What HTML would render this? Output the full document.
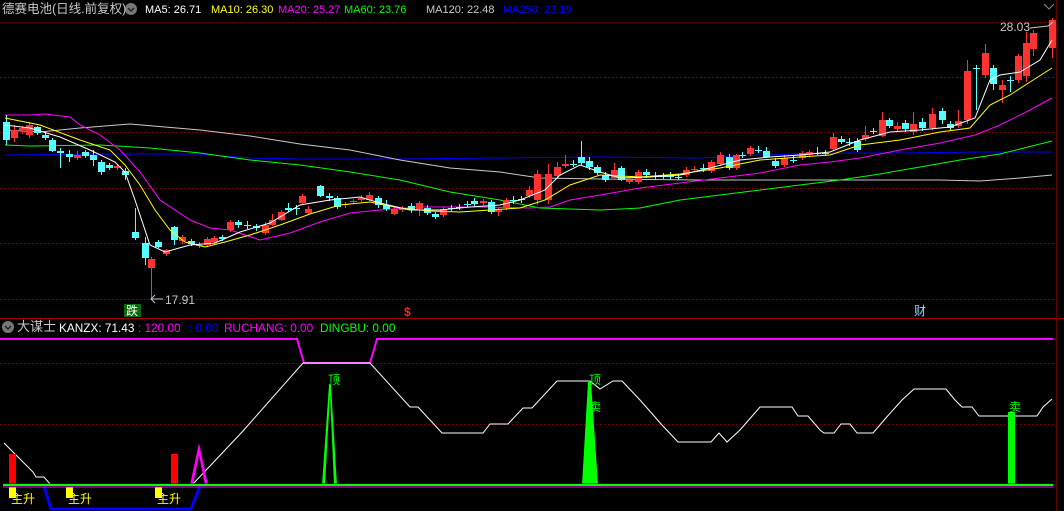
<!DOCTYPE html>
<html><head><meta charset="utf-8"><style>
body{margin:0;background:#000;width:1064px;height:511px;overflow:hidden;position:relative;font-family:"Liberation Sans","Noto Sans CJK SC",sans-serif}
.t{position:absolute;font-size:11px;white-space:nowrap;line-height:14px}
.l{font-size:11.8px}
svg{position:absolute;left:0;top:0}
</style></head><body>
<svg id="s" width="1064" height="511" viewBox="0 0 1064 511">
<g stroke="#8b0000" stroke-dasharray="1,3" stroke-width="1">
<line x1="0" y1="22.5" x2="1056" y2="22.5"/><line x1="0" y1="77.5" x2="1056" y2="77.5"/><line x1="0" y1="132.5" x2="1056" y2="132.5"/><line x1="0" y1="188.5" x2="1056" y2="188.5"/><line x1="0" y1="243.5" x2="1056" y2="243.5"/><line x1="0" y1="299.5" x2="1056" y2="299.5"/>
<line x1="0" y1="363.5" x2="1056" y2="363.5"/><line x1="0" y1="424.5" x2="1056" y2="424.5"/>
</g>
<line x1="0" y1="318.5" x2="1064" y2="318.5" stroke="#a00000"/>
<line x1="1056.5" y1="0" x2="1056.5" y2="511" stroke="#600000"/>
<g fill="none" stroke-width="1">
<polyline stroke="#0000ff" points="5,155 130,154 200,154 250,158 300,159 400,159 600,157 700,158 760,155 850,153 900,153 980,152 1052,152"/>
<polyline stroke="#c8c8c8" points="5,130 40,132 80,128 130,124 200,130 250,136 300,144 350,150 400,160 450,168 500,172 540,178 600,179 700,180 800,180 900,180 940,180 980,181 1020,178 1052,175"/>
<polyline stroke="#00ff00" points="5,145 30,146 100,145 150,148 200,153 250,160 300,165 350,172 400,180 450,192 500,200 540,208 600,210 640,208 680,200 720,195 760,190 800,185 840,180 880,174 920,167 960,160 1000,154 1052,141"/>
<polyline stroke="#ff00ff" points="5,115 30,115 45,114 70,117 80,125 100,135 120,150 140,172 160,200 190,220 210,228 230,230 260,240 290,233 320,222 350,213 380,210 420,207 480,207 530,208 550,207 570,200 600,195 640,188 680,183 720,178 760,173 800,165 830,162 860,158 900,150 940,143 975,135 1000,125 1030,110 1052,98"/>
</g>
<g id="c"></g>
<g fill="none" stroke-width="1">
<polyline stroke="#ffff00" points="5,118 40,125 80,140 110,150 125,165 140,185 155,210 170,230 185,242 205,247 225,242 250,235 280,225 310,214 340,205 370,202 400,208 430,211 460,212 490,210 520,208 545,200 570,185 600,175 640,177 680,174 720,168 760,160 800,157 830,155 860,145 900,140 940,132 970,128 990,105 1010,95 1030,82 1052,68"/>
<polyline stroke="#ffffff" points="5,125 30,128 60,137 90,150 115,162 125,172 135,200 150,245 165,252 190,245 215,243 240,232 270,223 300,205 330,200 360,197 380,203 410,210 440,210 470,207 500,205 520,200 545,190 560,175 580,165 600,172 620,178 650,177 680,175 710,168 740,160 770,157 800,155 830,152 860,140 890,132 920,130 950,127 975,118 990,80 1000,75 1020,72 1040,60 1052,40"/>
<polyline stroke="#c8c8c8" points="1030,28 1048,26 1053,22"/>
<polyline stroke="#c8c8c8" points="151,299 163,299"/><polyline stroke="#c8c8c8" points="155,295 151,299 155,303"/>
</g>
<rect x="124" y="304" width="17" height="13" fill="#0a6a0a"/>
<text x="126" y="315" font-size="12" fill="#fff" font-family="Noto Sans CJK SC,sans-serif">跌</text>
<text x="404" y="316" font-size="12" fill="#ff2020" font-weight="bold" font-family="Liberation Sans,sans-serif">$</text>
<text x="914" y="315" font-size="12" fill="#8fd8ff" font-family="Noto Sans CJK SC,sans-serif">财</text>
<text x="1000" y="31" font-size="12" fill="#c8c8c8" font-family="Liberation Sans,sans-serif">28.03</text>
<text x="165" y="304" font-size="12" fill="#c8c8c8" font-family="Liberation Sans,sans-serif">17.91</text>
<polyline fill="none" stroke="#ff00ff" stroke-width="2" points="0,339 297,339 304,363 370,363 377,339 1053,339"/>
<polyline fill="none" stroke="#fff" stroke-width="1" points="4,443 33,472 36,477 44,477 50,484 193,484 243,431 303,363 370,363 410,407 418,407 442,433 483,433 490,424 508,424 523,408 532,408 557,381 590,381 600,389 613,381 622,381 640,400 662,425 678,442 711,442 719,433 727,442 740,430 760,407 792,407 798,416 808,416 820,430 824,433 834,433 841,424 850,424 857,433 873,433 885,419 902,400 914,389 946,389 955,400 962,407 972,407 979,416 990,416 1037,416 1043,407 1052,399"/>
<polygon fill="#00ff00" points="322,485 329,385 331,385 337,485 334,485 330,395 325,485"/>
<polygon fill="#00ff00" points="582,485 588,382 591,382 598,485"/>
<rect x="1008" y="412" width="7" height="73" fill="#00ff00"/>
<rect x="9" y="454" width="7" height="30" fill="#ff0000"/>
<rect x="171" y="454" width="7" height="30" fill="#ff0000"/>
<polygon fill="#ff00ff" points="190,485 199,443 208,485 205,485 199,455 193,485"/>
<polyline fill="none" stroke="#0000ff" stroke-width="3" points="44,486 51,509 191,509 200,486"/>
<rect x="9" y="487" width="7" height="11" fill="#ffff00"/>
<rect x="66" y="487" width="7" height="11" fill="#ffff00"/>
<rect x="155" y="487" width="7" height="11" fill="#ffff00"/>
<line x1="3" y1="484" x2="1053" y2="484" stroke="#0000ff"/>
<line x1="3" y1="485" x2="1053" y2="485" stroke="#00ff00" stroke-width="2"/>
<line x1="3" y1="487" x2="1053" y2="487" stroke="#ff00ff"/>
<g font-size="12" fill="#ffff00" font-family="Noto Sans CJK SC,sans-serif">
<text x="11" y="503">主升</text><text x="68" y="503">主升</text><text x="157" y="503">主升</text></g>
<g font-size="12" fill="#00ff00" font-family="Noto Sans CJK SC,sans-serif">
<text x="328" y="384">顶</text><text x="589" y="384">顶</text><text x="589" y="411">卖</text><text x="1009" y="411">卖</text></g>
<circle cx="131" cy="9" r="6" fill="#777"/><polyline points="128,8 131,11 134,8" fill="none" stroke="#222" stroke-width="1.5"/>
<circle cx="8" cy="327" r="6" fill="#777"/><polyline points="5,326 8,329 11,326" fill="none" stroke="#222" stroke-width="1.5"/>
<polyline points="1044,4 1049,9 1054,4" fill="none" stroke="#888"/>
</svg>
<div class="t" style="left:2px;top:1px;color:#c8c8c8;font-size:12.5px;line-height:16px">德赛电池(日线.前复权)</div>
<div class="t" style="left:145px;top:3px;color:#fff">MA5: 26.71</div>
<div class="t" style="left:211px;top:3px;color:#ffff00">MA10: 26.30</div>
<div class="t" style="left:278px;top:3px;color:#ff00ff">MA20: 25.27</div>
<div class="t" style="left:344px;top:3px;color:#00ff00">MA60: 23.76</div>
<div class="t" style="left:426px;top:3px;color:#c8c8c8">MA120: 22.48</div>
<div class="t" style="left:503px;top:3px;color:#0000ff">MA250: 23.19</div>
<div class="t" style="left:17px;top:319px;color:#c8c8c8;font-size:13px;line-height:16px">大谋士</div>
<div class="t l" style="left:59px;top:321px;color:#fff">KANZX: 71.43</div>
<div class="t l" style="left:138px;top:321px;color:#ff00ff">: 120.00</div>
<div class="t l" style="left:189px;top:321px;color:#0000ff">: 0.00</div>
<div class="t l" style="left:224px;top:321px;color:#ff00ff">RUCHANG: 0.00</div>
<div class="t l" style="left:320px;top:321px;color:#00ff00">DINGBU: 0.00</div>
<script>
var d=[[6,122,140,115,145],[14,138,130,125,142],[22,130,128,126,134],[29,135,125,122,138],[37,127,133,126,135],[45,135,138,132,140],[52,140,151,138,152],[60,151,153,148,168],[69,154,157,150,162],[77,158,155,151,160],[85,152,156,150,158],[93,155,160,150,166],[101,162,172,160,175],[109,165,168,163,170],[117,168,166,164,170],[125,171,175,168,180],[135,232,238,208,240],[145,243,258,237,265],[151,268,259,257,299],[158,242,247,240,248],[166,254,250,249,256],[174,227,240,226,245],[182,241,237,235,244],[191,241,244,239,246],[199,246,245,242,248],[207,245,239,237,246],[214,242,238,236,244],[222,237,239,235,241],[230,230,222,220,232],[238,222,225,220,228],[247,225,225,221,229],[256,226,228,224,231],[265,233,225,222,235],[272,225,220,214,226],[281,220,212,210,221],[288,208,210,203,212],[296,208,208,205,215],[302,203,196,194,204],[308,213,209,206,215],[320,186,196,185,197],[329,196,198,193,201],[337,198,207,196,209],[345,205,204,202,208],[353,202,201,199,204],[361,200,198,195,202],[369,200,195,192,201],[378,198,205,196,208],[386,205,209,200,211],[394,214,209,207,215],[402,210,208,206,212],[411,206,210,203,213],[419,209,203,201,216],[427,208,213,205,215],[435,214,217,212,219],[443,215,209,207,217],[451,208,208,205,211],[459,207,207,204,210],[467,204,204,201,207],[474,201,204,198,206],[483,203,201,199,205],[491,202,212,200,214],[498,212,210,208,216],[506,208,200,198,210],[513,200,200,196,204],[521,199,199,196,203],[529,196,190,186,198],[537,200,174,170,205],[548,200,174,164,204],[557,176,167,162,178],[565,166,164,155,168],[573,164,165,160,167],[581,157,163,141,165],[589,161,167,157,170],[597,167,173,165,175],[605,175,180,172,182],[614,178,170,163,180],[621,168,180,166,181],[629,182,180,178,184],[638,182,172,170,184],[646,172,175,169,178],[655,176,176,172,180],[663,176,176,173,179],[670,176,176,172,180],[678,177,177,174,180],[686,175,170,167,177],[694,170,169,166,172],[703,168,168,164,172],[711,171,162,160,173],[720,164,155,152,166],[729,157,168,154,170],[736,168,155,154,170],[742,155,155,152,158],[750,154,148,146,156],[758,150,150,146,153],[766,151,157,147,158],[775,161,166,158,168],[784,165,158,155,167],[793,160,160,156,163],[802,158,153,151,160],[809,155,152,150,157],[817,153,153,147,155],[825,153,153,150,156],[833,149,137,133,151],[841,139,142,136,144],[849,142,142,138,146],[857,141,150,138,152],[865,139,135,126,141],[873,131,131,128,134],[882,136,120,112,137],[889,120,126,118,128],[897,129,126,122,131],[905,123,129,120,132],[913,132,124,112,135],[922,122,128,118,131],[932,128,114,108,130],[942,111,120,108,124],[950,124,128,121,130],[958,126,121,110,128],[967,120,71,60,124],[976,68,68,65,110],[985,75,53,44,78],[993,68,84,65,90],[1002,90,85,80,103],[1010,80,80,76,92],[1018,80,56,54,83],[1026,76,43,32,82],[1033,49,33,30,56],[1052,48,20,18,58]];
var g=document.getElementById('c'),h='';
d.forEach(function(c){var up=c[2]<c[1],col=up?'#ff3232':'#54ffff';var t=Math.min(c[1],c[2]),b=Math.max(c[1],c[2]);if(b-t<1)b=t+1;
h+='<line x1="'+(c[0]+.5)+'" y1="'+c[3]+'" x2="'+(c[0]+.5)+'" y2="'+c[4]+'" stroke="'+col+'"/>';
h+='<rect x="'+(c[0]-3)+'" y="'+t+'" width="7" height="'+(b-t)+'" fill="'+col+'"/>';});
g.innerHTML=h;
</script>
</body></html>
